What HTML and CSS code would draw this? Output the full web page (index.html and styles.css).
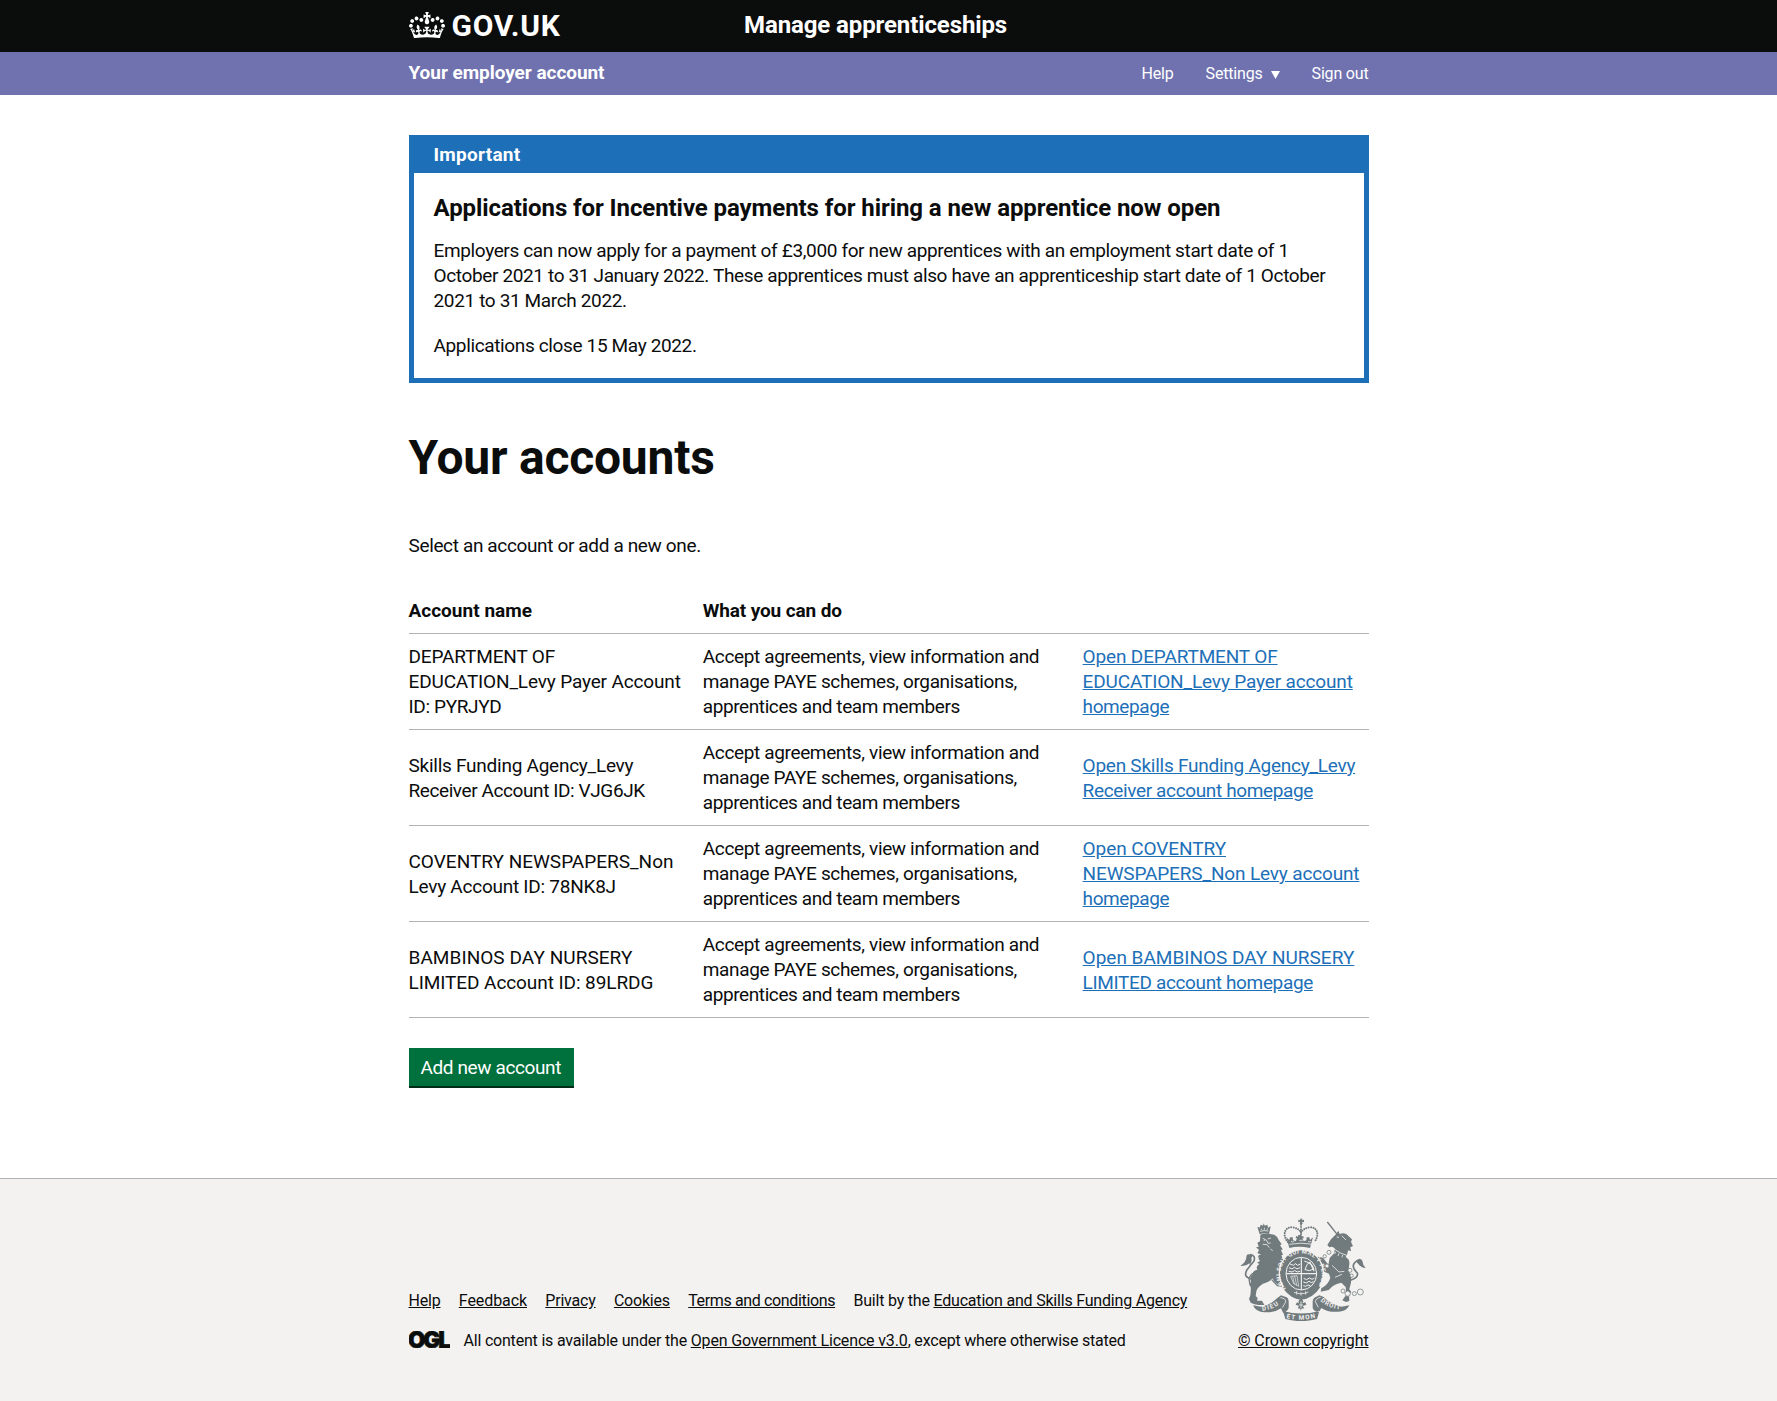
FILE: index.html
```html
<!DOCTYPE html>
<html lang="en">
<head>
<meta charset="utf-8">
<title>Your accounts - Manage apprenticeships</title>
<link rel="stylesheet" href="styles.css">
</head>
<body>
<header class="header">
  <div class="container header-inner">
    <a class="logo" href="#">
      <svg class="crown" viewBox="0 0 132 97" width="36" height="26.5" aria-hidden="true"><path fill="currentColor" fill-rule="evenodd" d="M25 30.2c3.5 1.5 7.7-.2 9.1-3.7 1.5-3.6-.2-7.8-3.9-9.2-3.6-1.4-7.6.3-9.1 3.9-1.4 3.5.3 7.5 3.9 9zM9 39.5c3.6 1.5 7.8-.2 9.2-3.7 1.5-3.6-.2-7.8-3.9-9.1-3.6-1.5-7.6.2-9.1 3.8-1.4 3.5.3 7.5 3.8 9zM4.4 57.2c3.5 1.5 7.7-.2 9.1-3.8 1.5-3.6-.2-7.7-3.9-9.1-3.5-1.5-7.6.3-9.1 3.8-1.4 3.5.3 7.6 3.9 9.1zm38.3-21.4c3.5 1.5 7.7-.2 9.1-3.8 1.5-3.6-.2-7.7-3.9-9.1-3.6-1.5-7.6.3-9.1 3.8-1.3 3.6.4 7.7 3.9 9.1zm64.4-5.6c-3.6 1.5-7.8-.2-9.1-3.7-1.5-3.6.2-7.8 3.8-9.2 3.6-1.4 7.7.3 9.2 3.9 1.3 3.5-.4 7.5-3.9 9zm15.9 9.3c-3.6 1.5-7.7-.2-9.1-3.7-1.5-3.6.2-7.8 3.7-9.1 3.6-1.5 7.7.2 9.2 3.8 1.5 3.5-.3 7.5-3.8 9zm4.7 17.7c-3.6 1.5-7.8-.2-9.2-3.8-1.5-3.6.2-7.7 3.9-9.1 3.6-1.5 7.7.3 9.2 3.8 1.3 3.5-.4 7.6-3.9 9.1zM89.3 35.8c-3.6 1.5-7.8-.2-9.2-3.8-1.4-3.6.2-7.7 3.9-9.1 3.6-1.5 7.7.3 9.2 3.8 1.4 3.6-.3 7.7-3.9 9.1zM69.7 17.7l8.9 4.7V9.3l-8.9 2.8c-.2-.3-.5-.6-.9-.9L72.4 0H59.6l3.5 11.2c-.3.3-.6.5-.9.9l-8.8-2.8v13.1l8.8-4.7c.3.3.6.7.9.9l-5 15.4v.1c-.2.8-.4 1.6-.4 2.4 0 4.1 3.1 7.5 7 8.1h.2c.3 0 .7.1 1 .1.4 0 .7 0 1-.1h.2c4-.6 7.1-4.1 7.1-8.1 0-.8-.1-1.7-.4-2.4V34l-5.1-15.4c.4-.2.7-.6 1-.9zM66 92.8c16.9 0 32.8 1.1 47.1 3.2 4-16.9 8.9-26.7 14-33.5l-9.6-3.4c1 4.9 1.1 7.2 0 10.2-1.5-1.4-3-4.3-4.2-8.7L108.6 76c2.8-2 5-3.2 7.5-3.3-4.4 9.4-10 11.9-13.6 11.2-4.3-.8-6.3-4.6-5.6-7.9 1-4.7 5.7-5.9 8-.5 4.3-8.7-3-11.4-7.6-8.8 7.1-7.2 7.9-13.5 2.1-21.1-8 6.1-8.1 12.3-4.5 20.8-4.7-5.4-12.1-2.5-9.5 6.2 3.4-5.2 7.9-2 7.2 3.1-.6 4.3-6.4 7.8-13.5 7.2-10.3-.9-10.9-8-11.2-13.8 2.5-.5 7.1 1.8 11 7.3L80.2 60c-4.1 4.4-8 5.3-12.3 5.4 1.4-4.4 8-11.6 8-11.6H55.5s6.4 7.2 7.9 11.6c-4.2-.1-8-1-12.3-5.4l1.4 16.4c3.9-5.5 8.5-7.7 10.9-7.3-.3 5.8-.9 12.8-11.1 13.8-7.2.6-12.9-2.9-13.5-7.2-.7-5 3.8-8.3 7.1-3.1 2.7-8.7-4.6-11.6-9.4-6.2 3.7-8.5 3.6-14.7-4.6-20.8-5.8 7.6-5 13.9 2.2 21.1-4.7-2.6-11.9.1-7.7 8.8 2.3-5.5 7.1-4.2 8.1.5.7 3.3-1.3 7.1-5.7 7.9-3.5.7-9-1.8-13.5-11.2 2.5.1 4.7 1.3 7.5 3.3l-4.7-15.4c-1.2 4.4-2.7 7.2-4.3 8.7-1.1-3-.9-5.3 0-10.2l-9.5 3.4c5 6.9 9.9 16.7 14 33.5 14.8-2.1 30.8-3.2 47.7-3.2z"/></svg>
      <span class="logo-text">GOV.UK</span>
    </a>
    <a class="product" href="#">Manage apprenticeships</a>
  </div>
</header>
<div class="account-bar">
  <div class="container account-bar-inner">
    <a class="account-title" href="#">Your employer account</a>
    <nav class="account-nav">
      <a href="#">Help</a>
      <a href="#" class="settings">Settings<svg viewBox="0 0 9 8" width="9" height="8" aria-hidden="true"><path fill="currentColor" d="M0 0h9L4.5 8z"/></svg></a>
      <a href="#">Sign out</a>
    </nav>
  </div>
</div>
<main class="container">
  <section class="banner">
    <div class="banner-title">Important</div>
    <div class="banner-body">
      <h2>Applications for Incentive payments for hiring a new apprentice now open</h2>
      <p>Employers can now apply for a payment of £3,000 for new apprentices with an employment start date of 1<br>October 2021 to 31 January 2022. These apprentices must also have an apprenticeship start date of 1 October<br>2021 to 31 March 2022.</p>
      <p>Applications close 15 May 2022.</p>
    </div>
  </section>
  <h1>Your accounts</h1>
  <p class="intro">Select an account or add a new one.</p>
  <table class="accounts">
    <colgroup><col class="col-name"><col class="col-role"><col></colgroup>
    <thead>
      <tr><th>Account name</th><th class="track-snug">What you can do</th><th></th></tr>
    </thead>
    <tbody>
      <tr>
        <td><span class="track-snug">DEPARTMENT OF<br>EDUCATION_Levy Payer Account</span><br>ID: PYRJYD</td>
        <td>Accept agreements, view information and<br>manage PAYE schemes, organisations,<br><span class="track-tight">apprentices and team members</span></td>
        <td><a href="#"><span class="track-snug">Open DEPARTMENT OF<br>EDUCATION_Levy Payer account</span><br><span class="track-tight">homepage</span></a></td>
      </tr>
      <tr>
        <td><span class="track-mid">Skills Funding Agency_Levy</span><br><span class="track-tight">Receiver Account ID: VJG6JK</span></td>
        <td>Accept agreements, view information and<br>manage PAYE schemes, organisations,<br><span class="track-tight">apprentices and team members</span></td>
        <td><a href="#"><span class="track-mid">Open Skills Funding Agency_Levy</span><br>Receiver account homepage</a></td>
      </tr>
      <tr>
        <td><span class="track-none">COVENTRY NEWSPAPERS_Non</span><br><span class="track-mid">Levy Account ID: 78NK8J</span></td>
        <td>Accept agreements, view information and<br>manage PAYE schemes, organisations,<br><span class="track-tight">apprentices and team members</span></td>
        <td><a href="#"><span class="track-fine">Open COVENTRY</span><br><span class="track-snug">NEWSPAPERS_Non Levy account</span><br><span class="track-tight">homepage</span></a></td>
      </tr>
      <tr>
        <td><span class="track-wide">BAMBINOS DAY NURSERY</span><br><span class="track-fine">LIMITED Account ID: 89LRDG</span></td>
        <td>Accept agreements, view information and<br>manage PAYE schemes, organisations,<br><span class="track-tight">apprentices and team members</span></td>
        <td><a href="#"><span class="track-none">Open BAMBINOS DAY NURSERY</span><br>LIMITED account homepage</a></td>
      </tr>
    </tbody>
  </table>
  <a class="button" href="#">Add new account</a>
</main>
<footer class="footer">
  <div class="container footer-inner">
    <div class="footer-main">
      <ul class="footer-links">
        <li><a href="#">Help</a></li>
        <li><a href="#" class="track-fine">Feedback</a></li>
        <li><a href="#">Privacy</a></li>
        <li><a href="#">Cookies</a></li>
        <li><a href="#" class="track-base">Terms and conditions</a></li>
        <li>Built by the <a href="#">Education and Skills Funding Agency</a></li>
      </ul>
      <div class="licence">
        <svg class="ogl" viewBox="0 0 41 17" width="41" height="17" role="img" aria-label="Open Government Licence"><text x="-1.1" y="16.7" textLength="43" lengthAdjust="spacing">OGL</text></svg>
        <span>All content is available under the <a href="#" class="track-snug">Open Government Licence v3.0</a>, except where otherwise stated</span>
      </div>
    </div>
    <div class="copyright">
      <svg class="arms" viewBox="60 40 380 310" width="126.7" height="103.3" aria-hidden="true">
        <defs>
          <path id="garter" d="M199 252A62 62 0 1 1 290 249"/>
          <path id="dieu" d="M127 318Q157 316 183 295"/>
          <path id="mon" d="M199 340Q243 351 290 338"/>
          <path id="droit" d="M301 289Q325 311 364 315"/>
        </defs>
        <!-- royal crown -->
        <path d="M240 42h7l-1 5 6-2v8l-6-2 2 7h-9l2-7-6 2v-8l6 2z"/>
        <path class="dots" d="M203 112C185 88 196 67 215 68c15 1 25 8 28 16 4-9 14-15 29-16 18 0 29 20 11 44"/>
        <path class="dots" d="M243 60v42"/>
        <path d="M199 98l9 8 2-8 8 0 1 9 8 3 4-9h-4l1-7 6 2 1-5h8l1 5 6-2 1 7h-4l4 9 8-3 1-9 8 0 2 8 9-8-9 32q-35-7-62 0z"/>
        <path class="cut" d="M208 119q35-7 70 0M213 110q5 3 9 1M264 111q5 2 9-1M238 107h10"/>
        <!-- lion -->
        <path d="M112 66l7 3 3-9 7 3 2-7 3 7 8-3 2 9 8-4-5 23q-15-5-28 1z"/>
        <path class="cut" d="M120 80q12-4 25-1M124 72v4M133 69v6M142 71v4"/>
        <path d="M121 90q14-6 34-1 16 2 21 17l9 13-5 3 8 12-5 3 6 13-5 2 6 15-3 8-5-3q-6 18-4 34l12 10 11 18-4 8-12-7-10 6-11-9-5-8q-10 8-25 12-21 9-25 24l-2 14 6 6-2 8h15l7 13h-17l-13-2-11-5-5-11 4-11q2-14 1-25l-4-6 5-10q-6-14 4-21 2-13 15-15-6-10 6-17l-7-4 9-5q-9-9-4-17l7-3-11-3 5-10-9-8 8-2-4-12 8-4z"/>
        <path class="limb" d="M113 198q-22 9-26 25l3 18M155 225l17 18 15 1M160 180l20 15 8-2"/>
        <path class="tail" d="M94 223q-25-5-14-26 14-19 22-28 5-16-10-19"/>
        <path d="M97 153q-18-10-18 5 0 13-18 26 17 2 27-8l1 5q8-12 5-20z"/>
        <path class="cut" d="M128 101l9 4-6 3M143 103l10-3M139 106l5 10 8-1M128 119l13 1 7 9M151 133l7 5M159 222q-20 18-32 17M117 158l-12 13M154 236l9 9"/>
        <!-- unicorn -->
        <path class="limb" d="M322 52l30 38"/>
        <path d="M348 89l7-11 4 10q18-6 27 7l10 9-3 8 6 12-8 4 2 12-9-3q-2 15-7 20 15 8 10 28l-1 15 8 14-1 20-5 20 6 8-7 9 1 18-10 3-11-5 12-17-2-23-13-13q-24 4-38 22l-24 5 2-10q20-10 27-31l-4-13-20-8-18 2-5-15-11-7 12-5 8 13 19 1-10-19-14-3 4-10 17 3 16 21 4-20 14-15 1-14-8-5-8 2-6-7 11-17z"/>
        <path class="cut" d="M341 132q20 16 45 22M347 141l-3 7M357 146l-3 8M368 151l-2 7M350 97l7 1M336 182l21 20 16-2M345 218l21-9M365 93l13 13"/>
        <path class="tail" d="M393 226q23-8 19-21-20-19-7-32 9-10 16-2"/>
        <path d="M407 170q12-15 20-2 1 12 10 22-14-1-22-12z"/>
        <g class="chain"><circle cx="327" cy="143" r="6"/><circle cx="314" cy="155" r="5"/><circle cx="321" cy="184" r="6"/><circle cx="390" cy="197" r="6"/><circle cx="395" cy="213" r="5"/><circle cx="369" cy="259" r="6"/><circle cx="383" cy="267" r="8"/><circle cx="403" cy="267" r="6"/><circle cx="421" cy="262" r="9"/></g>
        <!-- garter and shield -->
        <ellipse cx="244" cy="207" rx="68" ry="73" class="halo"/>
        <ellipse cx="244" cy="206" rx="64" ry="69"/>
        <path class="strap" d="M192 246q25 33 51 33 32-2 53-35"/>
        <text class="garter-text"><textPath href="#garter" startOffset="1" textLength="274">HONI SOIT QUI MAL Y PENSE</textPath></text>
        <ellipse cx="244" cy="207" rx="46" ry="49" class="shield"/>
        <path class="line" d="M244 159v96M199 207h91"/>
        <path class="beasts" d="M210 178l10 4 6-5 7 5 8-4M207 189l9 4 7-5 8 5 9-4M206 200l10 2 8-4 8 4 8-2M251 221l9 4 8-5 8 4 7-3M250 232l9 3 8-5 7 4 6-3M250 243l7 2 7-4 7 2"/>
        <path class="beasts" d="M255 195l6-15 9-8 4 10 5 12-11 4z"/>
        <path class="harp" d="M212 215l19-2 5 32-15-8zM218 215l5 24M224 214l6 28"/>
        <path class="line" d="M253 169q28 8 29 31"/>
        <path class="cut" d="M222 263q22 9 43-1M230 259v11M243 263v10M257 260v10"/>
        <!-- scroll -->
        <path d="M99 302q18 4 24 4 27-4 48-25l12-9 12 4q11 2 11 15v19q-3 10-17 14l-6-13q-24 17-61 10-16-3-23-19zM388 302q-18 4-24 4-31-6-53-29l-13-5-11 5q-10 4-9 18v15q3 10 19 12l7-12q24 16 61 10 16-3 23-18zM189 319q54 15 109 0l-7 24q-48 13-95 0z"/>
        <path class="cut" d="M181 279q17 2 16 13l-10 17M302 278q-15 3-16 13l9 17"/>
        <text class="motto"><textPath href="#dieu" textLength="53">DIEU</textPath></text>
        <text class="motto"><textPath href="#mon" textLength="88">ET MON</textPath></text>
        <text class="motto"><textPath href="#droit" textLength="65">DROIT</textPath></text>
        <path d="M243 280l7 10-3 6 9-3 3 7-11 4 5 7-9 1-1 8-2-8-8-1 4-7-10-4 4-7 7 3-3-6z"/>
        <path class="cut" d="M243 290v20M237 301h12"/>
      </svg>
      <a href="#" class="copyright-link">© Crown copyright</a>
    </div>
  </div>
</footer>
</body>
</html>
```
FILE: styles.css
```css
* { box-sizing: border-box; }
body {
  margin: 0;
  background: #fff;
  color: #0b0c0c;
  font-family: Roboto, "Liberation Sans", sans-serif;
  font-size: 19px;
  line-height: 25px;
  letter-spacing: -0.36px;
}
h1, h2, p { margin: 0; }
.container { width: 960px; margin: 0 auto; }

.track-tight { letter-spacing: -0.41px; }
.track-base { letter-spacing: -0.36px; }
.track-mid { letter-spacing: -0.25px; }
.track-snug { letter-spacing: -0.15px; }
.track-fine { letter-spacing: -0.08px; }
.track-none { letter-spacing: 0; }
.track-wide { letter-spacing: 0.06px; }

.header { height: 52px; background: #0b0c0c; color: #fff; }
.header a, .account-bar a { color: #fff; text-decoration: none; }
.header-inner { display: grid; grid-template-columns: 335.5px 1fr; padding-top: 10px; }
.logo { display: flex; gap: 7px; padding-top: 1.5px; }
.crown { display: block; }
.logo-text {
  font-size: 30px;
  line-height: 30px;
  font-weight: 700;
  letter-spacing: 0.7px;
  padding-top: 0.5px;
  margin-top: -1px;
}
.product { font-size: 24px; line-height: 30px; font-weight: 700; letter-spacing: -0.11px; }

.account-bar { height: 43px; background: #6f72af; }
.account-bar-inner { display: flex; justify-content: space-between; padding-top: 8px; }
.account-title { font-weight: 700; letter-spacing: -0.05px; }
.account-nav {
  display: flex;
  gap: 32px;
  padding-top: 4px;
  font-size: 16px;
  line-height: 20px;
  letter-spacing: -0.18px;
}
.settings svg { margin-left: 8px; }

.banner { margin-top: 40px; border: 5px solid #1d70b8; }
.banner-title {
  padding: 2px 20px 6px;
  background: #1d70b8;
  color: #fff;
  font-weight: 700;
  letter-spacing: 0.27px;
}
.banner-body { padding: 20px; }
.banner h2 { margin-bottom: 15px; font-size: 24px; line-height: 30px; letter-spacing: -0.08px; }
.banner p { white-space: nowrap; }
.banner p + p { margin-top: 20px; }

h1 { margin: 50px 0; font-size: 48px; line-height: 50px; letter-spacing: -0.24px; }
.intro { margin-bottom: 30px; }

.accounts { width: 100%; table-layout: fixed; border-spacing: 0; }
.col-name { width: 294.3px; }
.col-role { width: 379.8px; }
.accounts th, .accounts td {
  padding: 10px 0;
  border-bottom: 1px solid #b1b4b6;
  text-align: left;
  vertical-align: middle;
  white-space: nowrap;
}
.accounts th { height: 46px; letter-spacing: 0.02px; }
.accounts th.track-snug { letter-spacing: -0.13px; }
.accounts a { color: #1d70b8; }

.button {
  display: block;
  width: 165px;
  height: 38px;
  margin-top: 30px;
  padding: 10px 0 9px 12px;
  background: #00703c;
  box-shadow: 0 2px 0 #002d18;
  color: #fff;
  line-height: 19px;
  text-decoration: none;
  letter-spacing: -0.39px;
}

.footer {
  margin-top: 92px;
  min-height: 223px;
  border-top: 1px solid #b1b4b6;
  background: #f3f2f1;
  font-size: 16px;
  line-height: 20px;
  letter-spacing: -0.2px;
}
.footer a { color: #0b0c0c; }
.footer-inner { display: flex; justify-content: space-between; align-items: flex-end; padding-top: 39px; }
.footer-main { display: grid; gap: 20px; }
.footer-links { display: flex; gap: 18.3px; margin: 0; padding: 0; list-style: none; }
.licence { display: flex; gap: 14px; }
.ogl { display: block; }
.ogl text { font: 900 22.5px Inter, sans-serif; letter-spacing: 0; fill: #0b0c0c; stroke: #0b0c0c; stroke-width: 0.6px; }
.copyright { display: grid; justify-items: center; gap: 10px; }
.copyright-link { letter-spacing: -0.12px; }

.arms { display: block; fill: #717a7c; }
.arms .dots { fill: none; stroke: #717a7c; stroke-width: 6; stroke-dasharray: 0.1 7; stroke-linecap: round; }
.arms .cut { fill: none; stroke: #f3f2f1; stroke-width: 2.4; }
.arms .limb { fill: none; stroke: #717a7c; stroke-width: 4; }
.arms .tail { fill: none; stroke: #717a7c; stroke-width: 5; stroke-linecap: round; }
.arms .chain { fill: #f3f2f1; stroke: #717a7c; stroke-width: 2.2; }
.arms .halo { fill: #f3f2f1; }
.arms .shield { stroke: #f3f2f1; stroke-width: 3; }
.arms .strap { fill: none; stroke: #717a7c; stroke-width: 12; }
.arms .line { fill: none; stroke: #f3f2f1; stroke-width: 3.5; }
.arms .beasts { fill: none; stroke: #f3f2f1; stroke-width: 3; }
.arms .harp { fill: none; stroke: #f3f2f1; stroke-width: 2; }
.arms text { fill: #f3f2f1; font-weight: 700; letter-spacing: 0; }
.arms .garter-text { font-size: 18px; transform: translate(0, 14px); transform: none; }
.arms .motto { font-size: 19px; }
```
